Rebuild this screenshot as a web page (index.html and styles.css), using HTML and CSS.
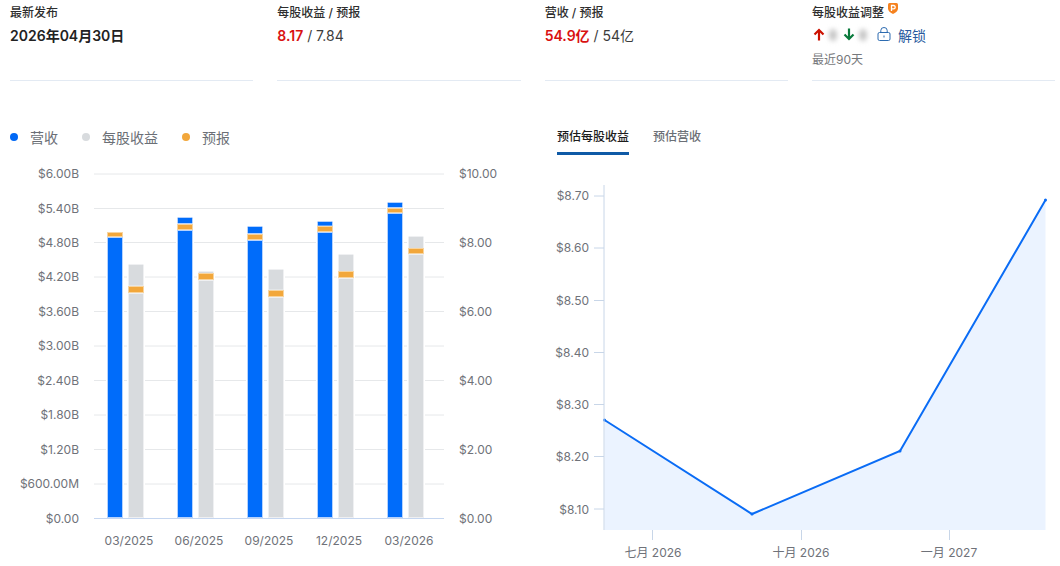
FILE: index.html
```html
<!DOCTYPE html>
<html lang="en">
<head>
  <meta charset="UTF-8" />
  <title>Earnings</title>
  <link rel="stylesheet" href="styles.css">
</head>
<body>

  <section class="stats">
    <div class="stat">
      <div class="stat-label">最新发布</div>
      <div class="stat-value date">2026年04月30日</div>
    </div>
    <div class="stat">
      <div class="stat-label">每股收益 / 预报</div>
      <div class="stat-value"><b>8.17</b> / 7.84</div>
    </div>
    <div class="stat">
      <div class="stat-label">营收 / 预报</div>
      <div class="stat-value"><b>54.9亿</b> / 54亿</div>
    </div>
    <div class="stat">
      <div class="stat-label">每股收益调整
        <svg class="pro-badge" width="10" height="11" viewBox="0 0 10 11">
          <path d="M0 1.5Q0 0 1.500 0H8.500Q10 0 10 1.500V5.500Q10 8.500 5 11Q0 8.500 0 5.500Z" fill="#f5821f"/>
          <path d="M3.500 8V2.500H5.500Q7.200 2.500 7.200 4.200T5.500 5.900H3.500" fill="none" stroke="#fff" stroke-width="1.300"/>
        </svg>
      </div>
      <div class="revisions">
        <svg class="arrow" width="12" height="13" viewBox="0 0 12 13"><path d="M6 12.500V2M1.500 6.500L6 2L10.500 6.500" fill="none" stroke="#cc1100" stroke-width="2.200"/></svg>
        <span class="blurred"></span>
        <svg class="arrow" width="12" height="13" viewBox="0 0 12 13"><path d="M6 .5V11M1.500 6.500L6 11L10.500 6.500" fill="none" stroke="#0a7a3c" stroke-width="2.200"/></svg>
        <span class="blurred"></span>
        <a class="unlock" href="#">
          <svg class="lock" width="14" height="14" viewBox="0 0 14 14">
            <rect x="1" y="5.500" width="12" height="8" rx="1.500" fill="none" stroke="#2d6bb0" stroke-width="1"/>
            <path d="M3.800 5.500V3.500A3.200 3 0 0 1 10.200 3.500V5.500" fill="none" stroke="#2d6bb0" stroke-width="1"/>
            <rect x="6.500" y="8.500" width="1" height="2" fill="#2d6bb0"/>
          </svg>
          解锁
        </a>
      </div>
      <div class="stat-sub">最近90天</div>
    </div>
  </section>

  <section class="charts">
    <div class="panel">
      <div class="legend">
        <span class="legend-item"><i class="dot dot-blue"></i>营收</span>
        <span class="legend-item"><i class="dot dot-grey"></i>每股收益</span>
        <span class="legend-item"><i class="dot dot-orange"></i>预报</span>
      </div>
      <svg class="chart" width="530" height="411" viewBox="0 155 530 411">
        <g class="grid">
          <line x1="94" x2="444" y1="174" y2="174"/>
          <line x1="94" x2="444" y1="208.500" y2="208.500"/>
          <line x1="94" x2="444" y1="242.500" y2="242.500"/>
          <line x1="94" x2="444" y1="277" y2="277"/>
          <line x1="94" x2="444" y1="311.500" y2="311.500"/>
          <line x1="94" x2="444" y1="346" y2="346"/>
          <line x1="94" x2="444" y1="380.500" y2="380.500"/>
          <line x1="94" x2="444" y1="415" y2="415"/>
          <line x1="94" x2="444" y1="449.500" y2="449.500"/>
          <line x1="94" x2="444" y1="484" y2="484"/>
        </g>
        <line class="baseline" x1="94" x2="444" y1="518.500" y2="518.500"/>

        <g class="axis-left">
          <text x="79" y="178">$6.00B</text>
          <text x="79" y="212.500">$5.40B</text>
          <text x="79" y="247">$4.80B</text>
          <text x="79" y="281">$4.20B</text>
          <text x="79" y="316">$3.60B</text>
          <text x="79" y="350">$3.00B</text>
          <text x="79" y="385">$2.40B</text>
          <text x="79" y="419">$1.80B</text>
          <text x="79" y="454">$1.20B</text>
          <text x="79" y="488">$600.00M</text>
          <text x="79" y="523">$0.00</text>
        </g>
        <g class="axis-right">
          <text x="459" y="178">$10.00</text>
          <text x="459" y="247">$8.00</text>
          <text x="459" y="316">$6.00</text>
          <text x="459" y="385">$4.00</text>
          <text x="459" y="454">$2.00</text>
          <text x="459" y="523">$0.00</text>
        </g>
        <g class="axis-bottom">
          <text x="129" y="545">03/2025</text>
          <text x="199" y="545">06/2025</text>
          <text x="269" y="545">09/2025</text>
          <text x="339" y="545">12/2025</text>
          <text x="409" y="545">03/2026</text>
        </g>

        <!-- gaps cut into the grid lines around each bar -->
        <g class="gap">
          <rect x="106" y="230" width="18" height="287"/>
          <rect x="127" y="262" width="18" height="255"/>
          <rect x="176" y="215" width="18" height="302"/>
          <rect x="197" y="269" width="18" height="248"/>
          <rect x="246" y="224" width="18" height="293"/>
          <rect x="267" y="267" width="18" height="250"/>
          <rect x="316" y="219" width="18" height="298"/>
          <rect x="337" y="252" width="18" height="265"/>
          <rect x="386" y="200" width="18" height="317"/>
          <rect x="407" y="234" width="18" height="283"/>
        </g>
        <g class="bar-blue">
          <rect x="107.500" y="237.500" width="15" height="280"/>
          <rect x="177.500" y="217.500" width="15" height="6" rx="1"/>
          <rect x="177.500" y="230.500" width="15" height="287"/>
          <rect x="247.500" y="226.500" width="15" height="7" rx="1"/>
          <rect x="247.500" y="240.500" width="15" height="277"/>
          <rect x="317.500" y="221.500" width="15" height="4.500" rx="1"/>
          <rect x="317.500" y="232.500" width="15" height="285"/>
          <rect x="387.500" y="202.500" width="15" height="5" rx="1"/>
          <rect x="387.500" y="213.500" width="15" height="304"/>
        </g>
        <g class="bar-grey">
          <rect x="128.500" y="264.500" width="15" height="21.500" rx="1"/>
          <rect x="128.500" y="293.500" width="15" height="224"/>
          <rect x="198.500" y="271.500" width="15" height="2" rx="1"/>
          <rect x="198.500" y="280.500" width="15" height="237"/>
          <rect x="268.500" y="269.500" width="15" height="20.500" rx="1"/>
          <rect x="268.500" y="297.500" width="15" height="220"/>
          <rect x="338.500" y="254.500" width="15" height="17" rx="1"/>
          <rect x="338.500" y="278.500" width="15" height="239"/>
          <rect x="408.500" y="236.500" width="15" height="12" rx="1"/>
          <rect x="408.500" y="254.500" width="15" height="263"/>
        </g>
        <g class="bar-orange">
          <rect x="107.500" y="232.500" width="15" height="4"/>
          <rect x="128.500" y="286.500" width="15" height="6"/>
          <rect x="177.500" y="224.500" width="15" height="5"/>
          <rect x="198.500" y="273.500" width="15" height="6"/>
          <rect x="247.500" y="234.500" width="15" height="5"/>
          <rect x="268.500" y="290.500" width="15" height="6"/>
          <rect x="317.500" y="226.500" width="15" height="5"/>
          <rect x="338.500" y="271.500" width="15" height="6"/>
          <rect x="387.500" y="208.500" width="15" height="4"/>
          <rect x="408.500" y="248.500" width="15" height="5"/>
        </g>
      </svg>
    </div>

    <div class="panel">
      <div class="tabs">
        <a class="tab active" href="#">预估每股收益</a>
        <a class="tab" href="#">预估营收</a>
      </div>
      <svg class="chart" width="530" height="411" viewBox="530 155 530 411">
        <path class="area" d="M604.500 420L752 514L900 451L1045.500 200V530H604.500Z"/>
        <polyline class="trend" points="604.500,420 752,514 900,451 1045.500,200"/>
        <g class="points">
          <circle cx="604.500" cy="420" r="1.500"/>
          <circle cx="752" cy="514" r="1.500"/>
          <circle cx="900" cy="451" r="1.500"/>
          <circle cx="1045.500" cy="200" r="1.500"/>
        </g>
        <g class="ticks">
          <line x1="604" x2="604" y1="185" y2="530"/>
          <line x1="594" x2="604" y1="196" y2="196"/>
          <line x1="594" x2="604" y1="248" y2="248"/>
          <line x1="594" x2="604" y1="300.500" y2="300.500"/>
          <line x1="594" x2="604" y1="352.500" y2="352.500"/>
          <line x1="594" x2="604" y1="404.500" y2="404.500"/>
          <line x1="594" x2="604" y1="456.500" y2="456.500"/>
          <line x1="594" x2="604" y1="509" y2="509"/>
          <line x1="652.500" x2="652.500" y1="530" y2="540"/>
          <line x1="801.500" x2="801.500" y1="530" y2="540"/>
          <line x1="949.500" x2="949.500" y1="530" y2="540"/>
        </g>
        <g class="axis-left">
          <text x="589" y="200">$8.70</text>
          <text x="589" y="252">$8.60</text>
          <text x="589" y="305">$8.50</text>
          <text x="589" y="357">$8.40</text>
          <text x="589" y="409">$8.30</text>
          <text x="589" y="461">$8.20</text>
          <text x="589" y="514">$8.10</text>
        </g>
        <g class="axis-bottom">
          <text x="653" y="557">七月 2026</text>
          <text x="801" y="557">十月 2026</text>
          <text x="949" y="557">一月 2027</text>
        </g>
      </svg>
    </div>
  </section>

</body>
</html>
```

FILE: styles.css
```css
* {
  box-sizing: border-box;
  margin: 0;
  padding: 0;
}

body {
  width: 1060px;
  height: 566px;
  overflow: hidden;
  background: #fff;
  color: #333;
  font-family: Inter, 'Noto Sans CJK SC', sans-serif;
}

a {
  text-decoration: none;
}

/* Top stats */
.stats {
  display: grid;
  grid-template-columns: repeat(4, 243.330px);
  column-gap: 24px;
  padding-left: 10px;
}

.stat {
  height: 81px;
  padding-top: 4px;
  border-bottom: 1px solid #e3eaf3;
}

.stat-label {
  font-size: 12px;
  line-height: 17px;
  font-weight: 500;
  color: #2e2e2e;
  position: relative;
}

.stat-value {
  margin-top: 6px;
  font-size: 14px;
  line-height: 18px;
  color: #3c3c3c;
}

.stat-value b {
  font-weight: 600;
  color: #d91111;
}

.stat-value.date {
  font-weight: 600;
  color: #222;
}

.pro-badge {
  position: absolute;
  top: -1px;
  left: 76px;
}

.revisions {
  display: flex;
  align-items: center;
  height: 18px;
  margin-top: 5px;
  padding-left: 1px;
}

.arrow {
  margin-top: -2px;
}

.blurred {
  width: 8px;
  height: 12px;
  margin: 0 6px 0 4px;
  border-radius: 50%;
  background: #c4c4c4;
  filter: blur(2.500px);
}

.unlock {
  display: flex;
  align-items: center;
  gap: 7px;
  margin-left: 4px;
  font-size: 14px;
  color: #2a5a9e;
}

.lock {
  margin-top: -2px;
}

.stat-sub {
  margin-top: 7px;
  font-size: 12px;
  line-height: 17px;
  color: #77797c;
}

/* Chart panels */
.charts {
  display: grid;
  grid-template-columns: 530px 530px;
}

.chart {
  display: block;
}

.legend {
  display: flex;
  align-items: center;
  height: 74px;
  padding: 37px 0 0 10px;
}

.legend-item {
  display: flex;
  align-items: center;
  margin-right: 24px;
  font-size: 14px;
  color: #6b6f76;
}

.dot {
  width: 8px;
  height: 8px;
  margin-right: 12px;
  border-radius: 50%;
}

.dot-blue { background: #0068f5; }
.dot-grey { background: #d8dbde; }
.dot-orange { background: #f2a73b; }

.tabs {
  display: flex;
  gap: 24px;
  height: 74px;
  padding: 45px 0 0 27px;
}

.tab {
  height: 29px;
  font-size: 12px;
  line-height: 22px;
  font-weight: 500;
  color: #6b6f76;
}

.tab.active {
  color: #1d1d1d;
  border-bottom: 3px solid #0f5aa6;
}

/* SVG pieces */
.grid line {
  stroke: #e6e8ea;
}

.baseline {
  stroke: #c5d6f0;
}

.gap rect {
  fill: #fff;
}

.bar-blue rect {
  fill: #006cfa;
  stroke: #b5d2fd;
}

.bar-grey rect {
  fill: #d8dbde;
  stroke: #eff0f2;
}

.bar-orange rect {
  fill: #f2a73b;
  stroke: #f8d49e;
}

.axis-left text,
.axis-right text,
.axis-bottom text {
  font-size: 12px;
  fill: #6f7279;
}

.axis-left text {
  text-anchor: end;
}

.axis-bottom text {
  text-anchor: middle;
}

.area {
  fill: #ebf3ff;
}

.trend {
  fill: none;
  stroke: #0a6cf5;
  stroke-width: 2;
}

.points circle {
  fill: #0a6cf5;
}

.ticks line {
  stroke: #c8d6e8;
}
```
